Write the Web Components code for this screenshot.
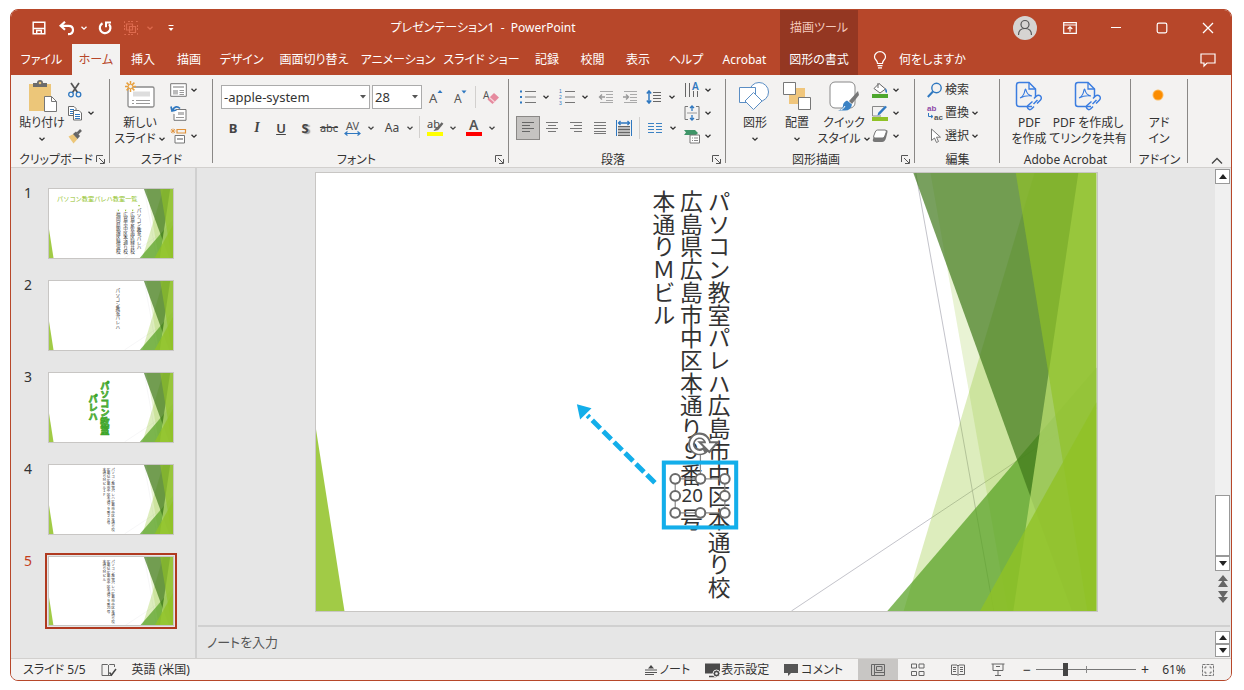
<!DOCTYPE html>
<html lang="ja">
<head>
<meta charset="utf-8">
<title>プレゼンテーション1 - PowerPoint</title>
<style>
  * { box-sizing: border-box; }
  body {
    margin: 0; height: 100vh; padding: 9px 12px 9px 10px; background: #fff; color: #333;
    font: 12px/16px "Noto Sans", "Noto Sans CJK JP", sans-serif;
    font-feature-settings: "palt";
  }
</style>
</head>
<body>
<ppt-app></ppt-app>
<script>
const BASE = `
  *, :host { box-sizing: border-box; }
  button, select, textarea { font: inherit; color: inherit; font-feature-settings: inherit; margin: 0; padding: 0; border: 0; background: none; border-radius: 0; }
  button { cursor: pointer; display: flex; align-items: center; justify-content: center; white-space: nowrap; }
`;
function define(name, css, html, setup) {
  const t = document.createElement('template');
  t.innerHTML = `<style>${BASE}${css}</style>${html}`;
  customElements.define(name, class extends HTMLElement {
    connectedCallback() {
      if (this.shadowRoot) return;
      this.attachShadow({ mode: 'open' }).append(t.content.cloneNode(true));
      if (setup) setup(this, this.shadowRoot);
    }
  });
}

/* name: [width, height, markup] */
const ICONS = {
  chev: [8, 8, '<path d="M1.5 2.8 4 5.2 6.5 2.8" stroke="currentColor" stroke-width="1.3"/>'],
  up: [12, 8, '<path d="M1 6.5 6 1.5l5 5" stroke="#444" stroke-width="1.3"/>'],
  caret: [6, 4, '<path d="M0 0h6L3 3.5z" fill="#555"/>'],
  save: [14, 14, '<path d="M1.2 1.2h11.6v11.6H1.2z" stroke="#fff" stroke-width="1.5"/><path d="M1 7.500h12M4.7 13V9.500h4.600V13" stroke="#fff" stroke-width="1.4"/>'],
  undo: [16, 14, '<path d="M6 .8 1.6 4.8 6 8.8M2 4.8h7.500q4.500 0 4.500 4.200t-5 4.200" stroke="#fff" stroke-width="2.200"/>'],
  redo: [14, 14, '<path d="M4.500 2.200A5.300 5.300 0 1 0 11 3.200" stroke="#fff" stroke-width="2.200"/><path d="M7 1.500h6M8 1v5.200" stroke="#fff" stroke-width="2"/>'],
  group: [16, 16, '<path d="M1.500 3v-1.500H3M13 1.500h1.500V3M14.500 13v1.500H13M3 14.500H1.500V13M5 1.500h6M5 14.500h6M1.500 5v6M14.500 5v6" stroke="#dd6a4e" stroke-dasharray="2 1"/><path d="M3.500 4h6v6h-6zM6.500 6.500h6v6h-6z" stroke="#dd6a4e" stroke-width="1.200"/>'],
  custom: [8, 8, '<path d="M1.500 1.500h5" stroke="#fff"/><path d="M1.500 4h5L4 7z" fill="#fff"/>'],
  avatar: [24, 24, '<circle cx="12" cy="12" r="12" fill="#d6d4d2"/><circle cx="12" cy="8.500" r="4" stroke="#555" stroke-width="1.200"/><path d="M5.500 19q0-6.500 6.500-6.500t6.500 6.500" stroke="#555" stroke-width="1.200"/>'],
  opts: [14, 12, '<path d="M.7.7h12.600v10.600H.7zM.7 3h12.600" stroke="#fff" stroke-width="1.200"/><path d="M7 9.800V5M4.700 7 7 4.800 9.300 7" stroke="#fff" stroke-width="1.200"/>'],
  min: [12, 12, '<path d="M1 5.500h10" stroke="#fff" stroke-width="1.200"/>'],
  max: [12, 12, '<rect x="1.200" y="1.200" width="9.600" height="9.600" rx="1.500" stroke="#fff" stroke-width="1.200"/>'],
  close: [12, 12, '<path d="M1 1l10 10M11 1 1 11" stroke="#fff" stroke-width="1.300"/>'],
  bulb: [14, 18, '<path d="M4.500 12.500Q4.500 10.500 3 9 1.500 7.500 1.500 5.800A5.400 5 0 0 1 12.500 5.800Q12.500 7.500 11 9 9.500 10.500 9.500 12.500zM4.500 14.700h5M5 16.800h4" stroke="#fff" stroke-width="1.200"/>'],
  comment: [16, 14, '<path d="M1 1h14v9H7l-3 3v-3H1z" stroke="#fff" stroke-width="1.200"/>'],
  paste: [32, 34, '<path d="M3 5h22v27H3z" fill="#ecc679"/><path d="M7 8V4h4q0-3 3-3t3 3h4v4z" fill="#6b6b6b"/><circle cx="14" cy="4" r="1.300" fill="#ecc679"/><path d="M18.500 17.500h7l5 5v10h-12z" fill="#fff" stroke="#777"/><path d="M25.500 17.500v5h5" stroke="#777"/>'],
  cut: [16, 16, '<path d="M4 1l6.500 9.500M12 1 5.500 10.500" stroke="#555" stroke-width="1.700"/><circle cx="4" cy="12.500" r="2.300" stroke="#2f78c0" stroke-width="1.300"/><circle cx="11.500" cy="12.500" r="2.300" stroke="#2f78c0" stroke-width="1.300"/>'],
  copy: [16, 16, '<path d="M1.500 1.500h5.500l2 2v7h-7.500z" fill="#fff" stroke="#6b6b6b"/><path d="M6.500 5.500h5.500l2.500 2.500v7h-8z" fill="#fff" stroke="#6b6b6b"/><path d="M3 4.500h4M3 6.500h3M3 8.500h3M8 9.500h5M8 11.500h5M8 13.500h5" stroke="#2f78c0"/>'],
  painter: [16, 16, '<path d="M1.500 8.500l5-2.500 4 5-4 4.500z" fill="#ecc679"/><path d="M6 6l3-2.500 4 4.500-2.500 3z" fill="#666"/><path d="M10.500 5.500 14 2" stroke="#666" stroke-width="2.600"/>'],
  newslide: [32, 32, '<rect x="4" y="7" width="26" height="20" rx="1.500" fill="#fff" stroke="#8a8a8a" stroke-width="1.300"/><path d="M9 11.500h17v5H9z" fill="#ddd"/><path d="M8 20.500h2M12 20.500h14M8 23.500h2M12 23.500h14" stroke="#999"/><path d="M6.500 1v11M1 6.500h11M2.600 2.600l7.800 7.800M10.400 2.600l-7.800 7.800" stroke="#e8a03c" stroke-width="1.500"/><circle cx="6.500" cy="6.500" r="2.200" fill="#f3f2f1" stroke="#e8a03c"/>'],
  layout: [17, 14, '<path d="M.7.7h15.600v12.600H.7z" fill="#fff" stroke="#777"/><path d="M3 3h11v2H3zM3 7h5v4.500H3z" fill="#bbb"/><path d="M9.500 7.500H14M9.500 9.500H14M9.500 11.500H14" stroke="#999"/>'],
  reset: [17, 16, '<path d="M6 4.500h10v10.800H4V9" fill="#fff" stroke="#777"/><path d="M8 7h6v3H8z" fill="#bbb"/><path d="M6 12.500h8" stroke="#999"/><path d="M10 3.500Q6-.5 2.500 5M1 1.500 2 6l4.500-1" stroke="#2f78c0" stroke-width="1.700"/>'],
  section: [17, 16, '<path d="M7 1.500h8.500v3.500H7z" stroke="#e0913a" stroke-width="1.200"/><path d="M.5 3h5M3 .5v5M1 1l4 4M5 1 1 5" stroke="#e0913a" stroke-width=".8"/><path d="M5 7.500h9.500v7.500H5z" fill="#fff" stroke="#777"/><path d="M7 10h6v2H7z" fill="#aaa"/>'],
  grow: [16, 16, '<text x="1" y="14" font-size="13" fill="#555">A</text><path d="M9.500 4l2.500-3 2.500 3z" fill="#2f78c0"/>'],
  shrink: [16, 16, '<text x="2" y="14" font-size="12" fill="#555">A</text><path d="M9.500 1.500l2.500 3 2.500-3z" fill="#2f78c0"/>'],
  clear: [16, 16, '<text x="0" y="10" font-size="10" fill="#555">A</text><path d="M11 4l5 4.500-6.500 6.500-5-4.500z" fill="#e58a9e"/><path d="M6.500 8.500l5 4.500" stroke="#f7d5dc" stroke-width="1.200"/>'],
  av: [18, 16, '<text x="2" y="10" font-size="11" fill="#555">AV</text><path d="M1 13.500h15M3.500 11.500l-2.500 2 2.500 2M13.500 11.500l2.500 2-2.500 2" stroke="#2f78c0" stroke-width="1.200"/>'],
  hilite: [18, 18, '<text x="1" y="9" font-size="11" fill="#444">ab</text><path d="M16.500 4l-5 6" stroke="#666" stroke-width="2.400"/><path d="M10.500 8l2 3-5 1z" fill="#666"/><path d="M1 13h16v4H1z" fill="#ff0"/>'],
  fcolor: [18, 18, '<text x="4" y="11" font-size="14" font-weight="600" fill="#555">A</text><path d="M1 13h16v4H1z" fill="#f00"/>'],
  bullets: [16, 14, '<path d="M5 1.500h11M5 7h11M5 12.500h11" stroke="#777"/><path d="M0 .5h2v2H0zM0 6h2v2H0zM0 11.500h2v2H0z" fill="#2f78c0"/>'],
  numbers: [16, 16, '<path d="M6 2.500h10M6 8h10M6 13.500h10" stroke="#777"/><g class="n" font-size="5" fill="#2f78c0"><text x="0" y="4">1</text><text x="0" y="10">2</text><text x="0" y="16">3</text></g>'],
  outdent: [16, 12, '<path d="M2 .5h13M8 3.500h7M8 6.500h7M8 9.500h7M2 11.500h13" stroke="#aaa"/><path d="M7 6H1.500M4 3.500 1.500 6 4 8.500" stroke="#999" stroke-width="1.400"/>'],
  indent: [16, 12, '<path d="M2 .5h13M8 3.500h7M8 6.500h7M8 9.500h7M2 11.500h13" stroke="#aaa"/><path d="M1 6h5.500M4 3.500 6.500 6 4 8.500" stroke="#999" stroke-width="1.400"/>'],
  spacing: [16, 14, '<path d="M7 2.500h8M7 5.500h8M7 8.500h8M7 11.500h8" stroke="#666"/><path d="M3 1v12M.8 3.500 3 1l2.200 2.500M.8 10.500 3 13l2.200-2.500" stroke="#2f78c0" stroke-width="1.500"/>'],
  textdir: [16, 16, '<path d="M1.500 1v14M5.500 1v14M9.500 9v6M13.500 9v6" stroke="#666"/><text x="8" y="8" font-size="10" font-weight="600" fill="#2f78c0">A</text>'],
  valign: [16, 16, '<path d="M4 1.500H1v13h3M12 1.500h3v13h-3" stroke="#777"/><path d="M3 8h10" stroke="#999"/><path d="M8 1v5M8 10v5M6 3l2-2 2 2M6 13l2 2 2-2" stroke="#2f78c0" stroke-width="1.300"/>'],
  smartart: [18, 16, '<path d="M1 2h11l3 3-2 2H1l2-2.500z" fill="#3f9568"/><path d="M7 7h9.500v8H7z" fill="#fff" stroke="#777"/><path d="M9 10h1M11 10h4M9 12.500h1M11 12.500h4" stroke="#888"/>'],
  left: [14, 12, '<path d="M1 .5h12M1 3.500h8M1 6.500h12M1 9.500h8" stroke="#666"/>'],
  center: [14, 12, '<path d="M1 .5h12M3 3.500h8M1 6.500h12M3 9.500h8" stroke="#777"/>'],
  right: [14, 12, '<path d="M1 .5h12M5 3.500h8M1 6.500h12M5 9.500h8" stroke="#777"/>'],
  justify: [14, 12, '<path d="M1 .5h12M1 3.500h12M1 6.500h12M1 9.500h12M1 11.500h12" stroke="#777"/>'],
  distribute: [16, 16, '<path d="M.5 0v16M15.500 0v16" stroke="#2f78c0"/><path d="M2 6.500h12v9H2z" fill="#bbb"/><path d="M2 6.500h12M2 9.500h12M2 12.500h12M2 15.500h12" stroke="#666"/><path d="M2 3h12M4.500 1 2.500 3l2 2M11.500 1l2 2-2 2" stroke="#2f78c0" stroke-width="1.300"/>'],
  columns: [14, 12, '<path d="M0 1.500h6M8 1.500h6M0 4.500h6M8 4.500h6M0 7.500h6M8 7.500h6M0 10.500h6M8 10.500h6" stroke="#3b82c4"/>'],
  shapes: [32, 30, '<circle cx="20" cy="11" r="9.500" fill="#fff" stroke="#5b8ec4"/><path d="M.5 6.500h16v15H.5z" fill="#fff" stroke="#5b8ec4"/><path d="M14.500 11.500l8.500 8.500-8.500 8.500L6 20z" fill="#fff" stroke="#5b8ec4"/>'],
  arrange: [30, 30, '<path d="M7 7h16v16H7z" fill="#f0c67c"/><path d="M1.500 1.500h12v12h-12zM16.500 16.500h12v12h-12z" fill="#fff" stroke="#777"/>'],
  quick: [32, 32, '<rect x="2" y="2" width="25" height="26" rx="5" fill="#fff" stroke="#888"/><path d="M30 11l1 4-7 9-3-3z" fill="#777"/><path d="M19 20.500l5 4q-1 6-7 6h-7q5-1.500 5-5 0-3 4-5z" fill="#3b82c4"/><path d="M17 26q-1 2.500-4 4" stroke="#fff"/>'],
  fill: [18, 16, '<path d="M8 1.500 14.500 7 9 11 3 6.500z" fill="#fff" stroke="#666"/><path d="M7 6V1" stroke="#666"/><path d="M14.500 6q2.500 3 1 5-2-1-1-5z" fill="#2f78c0"/><path d="M1 12h16v4H1z" fill="#4ea72e"/>'],
  outline: [18, 16, '<path d="M13 1.500H1.500V11H10" stroke="#888"/><path d="M16 2 9 9.500l-2.500 1 .7-2.700L14 .8z" fill="#2f78c0"/><path d="M1 12h16v4H1z" fill="#90c226"/>'],
  effects: [16, 14, '<path d="M5 1h9q2 0 1.500 2L14 9q-1 4-4 4H3q-3 0-2-3z" fill="#777"/><path d="M5.500 1H13q2 0 1.300 2l-1.500 4q-.6 2-2.500 2H3q-2 0-1.300-2l1.500-4Q4 1 5.500 1z" fill="#fff" stroke="#777"/>'],
  search: [16, 16, '<circle cx="9.500" cy="6" r="4.700" stroke="#2f78c0" stroke-width="1.400"/><path d="M6 9.500.8 15" stroke="#2f78c0" stroke-width="2"/>'],
  replace: [16, 16, '<g class="n" font-size="8" font-weight="700"><text x="0" y="6" fill="#8e4aa8">ab</text><text x="7" y="15" fill="#555">ac</text></g><path d="M1.500 8v3.500h4M4 10l2 1.500L4 13" stroke="#2f78c0"/>'],
  select: [16, 16, '<path d="M4.500 1v11.500l3-2.500 2 4.500 2-1-2-4.300h4z" fill="#fff" stroke="#777"/>'],
  pdf: [28, 30, '<path d="M17 25.500H4q-2.500 0-2.500-2.500V4Q1.500 1.500 4 1.500h10L20.500 8v8" stroke="#3b7de0" stroke-width="1.500"/><path d="M14 1.500V8h6.500" stroke="#3b7de0" stroke-width="1.300"/><path d="M5 17q4-2 5-8 .3-2 1 0 1 5 6 6-6-1-12 2z" stroke="#3b7de0" stroke-width="1.200"/><path d="M18.500 23l4-4M17.500 20.500l-4.500 4a2.500 2.500 0 0 0 3.500 3.500l2.500-2.500M19 17.500l2.500-2.500a2.800 2.800 0 0 1 4 4L22 22.500" stroke="#3b7de0" stroke-width="1.500"/>'],
  dot: [32, 32, '<circle cx="15" cy="15" r="5.500" fill="#fdb95a"/><circle cx="15" cy="15" r="4.500" fill="#fb8c00"/>'],
  launcher: [9, 9, '<path d="M.5 7V.5H7" stroke="#555"/><path d="M3 3l5 5M8.500 4v4.500H4" stroke="#555"/>'],
  spell: [16, 14, '<path d="M7.500 2v11M7.500 12.500H1V1.500h5.500l1 1 1-1h5V4M7.500 12.500h3" stroke="#666"/><path d="M8.500 9.500l2 2.500 4.500-6" stroke="#444" stroke-width="1.500"/>'],
  note: [12, 10, '<path d="M3 3.500h6L6 0z" fill="#444"/><path d="M0 5h12M0 7.500h12M0 9.500h9" stroke="#555"/>'],
  display: [16, 16, '<path d="M0 1.500h15v10H0z" fill="#4a4a4a"/><path d="M4 14.500h7" stroke="#4a4a4a" stroke-width="1.500"/><circle cx="11.500" cy="11.500" r="3.500" fill="#4a4a4a" stroke="#f3f2f1"/><circle cx="11.500" cy="11.500" r="1.300" fill="#f3f2f1"/>'],
  bubble: [14, 12, '<path d="M0 0h14v9H7l-3 3V9H0z" fill="#555"/>'],
  normal: [14, 12, '<path d="M.5.500h13v11H.5zM3.500.500v11M3.500 8.500h10M5.500 2.500h5.500v4H5.500z" stroke="#666"/>'],
  sorter: [14, 14, '<path d="M.5 1h5v4h-5zM8 1h5v4H8zM.5 8.500h5v4h-5zM8 8.500h5v4H8z" stroke="#666"/>'],
  reading: [14, 12, '<path d="M.5 1h5.500l1 1 1-1h5.500v9.500H8l-1 1-1-1H.5zM7 2v9M2 3.500h3M2 5.500h3M2 7.500h3M9 3.500h3M9 5.500h3M9 7.500h3" stroke="#666"/>'],
  show: [14, 14, '<path d="M.5 1h13M2 1v6.500h10V1M7 7.500v5M4 12.500h6M5 3.500h4" stroke="#666"/>'],
  fit: [12, 12, '<path d="M.5.500h11v11H.5z" stroke="#777" stroke-dasharray="3 1"/><path d="M3 4.500V3h1.500M7.500 3H9v1.500M9 7.500V9H7.500M4.500 9H3V7.500" stroke="#666"/>'],
  sup: [8, 5, '<path d="M0 5h8L4 0z" fill="#222"/>'],
  sdown: [8, 5, '<path d="M0 0h8L4 5z" fill="#222"/>'],
  prev: [10, 12, '<path d="M0 6h10L5 0zM0 12h10L5 5z" fill="#666"/>'],
  next: [10, 12, '<path d="M0 0h10L5 7zM0 6h10l-5 6z" fill="#666"/>'],
};
define('ppt-icon', ':host{display:inline-flex;flex:none} svg{display:block;fill:none;overflow:visible;font-family:"Noto Sans",sans-serif} .n{font-family:"Liberation Sans",sans-serif}', '<span></span>', (el, root) => {
  const [w, h, body] = ICONS[el.getAttribute('name')];
  root.querySelector('span').innerHTML = `<svg width="${w}" height="${h}" viewBox="0 0 ${w} ${h}" aria-hidden="true">${body}</svg>`;
});

/* Small ribbon button; "menu" adds a chevron */
define('tool-button', `
  :host{display:flex;flex:none}
  button{height:24px}
  .face{min-width:var(--face,24px);display:flex;align-items:center;justify-content:center;gap:2px}
  .menu{width:12px;display:flex;justify-content:center;flex:none}
  :host([pressed]) button{background:#c5c3c1;outline:1px solid #8a8886;outline-offset:-1px}
`, '<button><span class="face"><slot></slot></span></button>', (el, root) => {
  const b = root.querySelector('button');
  if (el.hasAttribute('label')) b.setAttribute('aria-label', el.getAttribute('label'));
  if (el.hasAttribute('menu')) b.insertAdjacentHTML('beforeend', '<span class="menu"><ppt-icon name="chev"></ppt-icon></span>');
});

/* Tall ribbon button: picture above up to two lines of text */
define('big-button', `
  :host{display:block;flex:none}
  button{width:100%;flex-direction:column;justify-content:flex-start}
  .pic{height:36px;display:flex;align-items:center}
  .line{height:16px;display:flex;align-items:center;gap:2px}
  .pic + .line{margin-top:1px}
`, '<button><span class="pic"><slot name="icon"></slot></span><span class="line"><slot></slot></span><span class="line"><slot name="second"></slot></span></button>');

define('ribbon-group', `
  :host{display:flex;flex-direction:column;background:linear-gradient(#8a8886,#8a8886) right 1px/1px 84px no-repeat}
  .body{height:74px;display:flex}
  footer{height:15px;display:flex;align-items:center;padding:0 5px}
  footer span{flex:1;text-align:center;white-space:nowrap}
`, '<div class="body"><slot></slot></div><footer><span></span></footer>', (el, root) => {
  root.querySelector('footer span').textContent = el.getAttribute('label');
  if (el.hasAttribute('launcher')) root.querySelector('footer').insertAdjacentHTML('beforeend', '<button aria-label="詳細"><ppt-icon name="launcher"></ppt-icon></button>');
});

define('combo-box', `
  :host{display:block;position:relative;height:24px}
  select{appearance:none;width:100%;height:100%;border:1px solid #ababab;background:#fff;padding:0 2px;font-size:13px}
  ppt-icon{position:absolute;right:4px;top:10px;pointer-events:none}
`, '<select><option></option></select><ppt-icon name="caret"></ppt-icon>', (el, root) => {
  root.querySelector('option').textContent = el.getAttribute('value');
  root.querySelector('select').setAttribute('aria-label', el.getAttribute('label'));
});

define('title-bar', `
  :host{display:grid;grid-template-columns:769px 78px 1fr;height:34px;color:#fff}
  .left,.right{display:flex;align-items:center}
  .quick{display:grid;grid-template-columns:38px 18px 16px 26px 26px 12px 30px;padding-left:9px}
  .quick button{height:34px}
  .title{flex:1;text-align:center;white-space:pre}
  .ctx{background:#943722;color:#f3c9bd;text-align:center;line-height:36px}
  .right{justify-content:flex-end}
  .right button{width:46px;height:34px}
  .right .me{width:24px;margin-right:10px}
  .dim{color:#dd6a4e}
`, `
  <div class="left">
    <div class="quick">
      <button aria-label="上書き保存"><ppt-icon name="save"></ppt-icon></button>
      <button aria-label="元に戻す"><ppt-icon name="undo"></ppt-icon></button>
      <button aria-label="元に戻す一覧"><ppt-icon name="chev"></ppt-icon></button>
      <button aria-label="繰り返し"><ppt-icon name="redo"></ppt-icon></button>
      <button aria-label="グループ化"><ppt-icon name="group"></ppt-icon></button>
      <button aria-label="グループ化一覧" class="dim"><ppt-icon name="chev"></ppt-icon></button>
      <button aria-label="カスタマイズ"><ppt-icon name="custom"></ppt-icon></button>
    </div>
    <div class="title">プレゼンテーション1  -  PowerPoint</div>
  </div>
  <div class="ctx">描画ツール</div>
  <div class="right">
    <button class="me" aria-label="アカウント"><ppt-icon name="avatar"></ppt-icon></button>
    <button aria-label="リボンの表示オプション"><ppt-icon name="opts"></ppt-icon></button>
    <button aria-label="最小化"><ppt-icon name="min"></ppt-icon></button>
    <button aria-label="最大化"><ppt-icon name="max"></ppt-icon></button>
    <button aria-label="閉じる"><ppt-icon name="close"></ppt-icon></button>
  </div>`);

const TABS = ['ファイル','ホーム','挿入','描画','デザイン','画面切り替え','アニメーション','スライド ショー','記録','校閲','表示','ヘルプ','Acrobat','図形の書式'];
define('ribbon-tabs', `
  :host{display:grid;grid-template-columns:61px 48px 46px 46px 59px 86px 82px 85px 46px 45px 46px 50px 67px 80px 1fr 46px;height:31px;color:#fff}
  .on{background:#f3f2f1;color:#b7472a}
  .ctx{background:#943722;margin-left:2px}
  .tell{justify-content:flex-start;gap:12px;padding-left:15px}
`, TABS.map((t, i) => `<button${i === 1 ? ' class="on"' : i === 13 ? ' class="ctx"' : ''}>${t}</button>`).join('') +
  '<button class="tell"><ppt-icon name="bulb"></ppt-icon>何をしますか</button><button aria-label="コメント"><ppt-icon name="comment"></ppt-icon></button>');

define('ppt-ribbon', `
  :host{display:grid;grid-template-columns:99px 103px 296px 217px 189px 85px 131px 57px 1fr;height:93px;padding-top:3px;background:#f3f2f1;border-bottom:1px solid #d2d0ce}
  .stack{display:flex;flex-direction:column;--face:20px}
  .stack tool-button{height:23px}
  .edit{padding-left:12px}
  .row{display:flex;align-items:center;height:24px}
  .sep{width:1px;height:22px;background:#d2d0ce}
  .row > .sep{margin:0 3px}
  .fontpane{display:flex;flex-direction:column;gap:7px;padding:7px 0 0 8px}
  .name{width:149px;margin-right:2px}
  .size{width:50px;margin-right:2px}
  .grp{display:flex;gap:3px}
  .para{display:flex;flex-direction:column;gap:7px;padding:7px 0 0 7px;width:173px}
  .w42{width:42px} .w46{width:46px} .w52{width:52px} .w56{width:56px} .w72{width:72px}
  .in8{margin-left:8px} .in6{margin-left:6px} .in2{margin-left:2px}
  i{font-family:"Liberation Serif",serif;font-size:14px;font-weight:bold}
  u{font-weight:600;font-size:13px} b{font-weight:700;font-size:13px}
  .sh{font-weight:700;font-size:13px;text-shadow:2px 1px 1px #999}
  s{font-size:11px}
  .collapse{align-self:end;justify-self:end;margin:0 8px 2px 0}
  .fmt{color:#444}
`, `
  <ribbon-group label="クリップボード" launcher>
    <big-button class="w46 in8"><ppt-icon slot="icon" name="paste"></ppt-icon>貼り付け<ppt-icon slot="second" name="chev"></ppt-icon></big-button>
    <div class="stack">
      <tool-button label="切り取り"><ppt-icon name="cut"></ppt-icon></tool-button>
      <tool-button label="コピー" menu><ppt-icon name="copy"></ppt-icon></tool-button>
      <tool-button label="書式のコピー/貼り付け"><ppt-icon name="painter"></ppt-icon></tool-button>
    </div>
  </ribbon-group>
  <ribbon-group label="スライド">
    <big-button class="w56 in2"><ppt-icon slot="icon" name="newslide"></ppt-icon>新しい<span slot="second">スライド</span><ppt-icon slot="second" name="chev"></ppt-icon></big-button>
    <div class="stack">
      <tool-button label="レイアウト" menu><ppt-icon name="layout"></ppt-icon></tool-button>
      <tool-button label="リセット"><ppt-icon name="reset"></ppt-icon></tool-button>
      <tool-button label="セクション" menu><ppt-icon name="section"></ppt-icon></tool-button>
    </div>
  </ribbon-group>
  <ribbon-group label="フォント" launcher>
    <div class="fontpane">
      <div class="row">
        <combo-box class="name" label="フォント" value="-apple-system"></combo-box>
        <combo-box class="size" label="フォント サイズ" value="28"></combo-box>
        <tool-button label="フォント サイズの拡大"><ppt-icon name="grow"></ppt-icon></tool-button>
        <tool-button label="フォント サイズの縮小"><ppt-icon name="shrink"></ppt-icon></tool-button>
        <span class="sep"></span>
        <tool-button label="書式のクリア"><ppt-icon name="clear"></ppt-icon></tool-button>
      </div>
      <div class="row fmt">
        <tool-button><b>B</b></tool-button>
        <tool-button><i>I</i></tool-button>
        <tool-button><u>U</u></tool-button>
        <tool-button><span class="sh">S</span></tool-button>
        <tool-button><s>abc</s></tool-button>
        <div class="grp">
          <tool-button label="文字の間隔" menu><ppt-icon name="av"></ppt-icon></tool-button>
          <tool-button menu><span>Aa</span></tool-button>
          <span class="sep"></span>
          <tool-button label="蛍光ペンの色" menu><ppt-icon name="hilite"></ppt-icon></tool-button>
          <tool-button label="フォントの色" menu><ppt-icon name="fcolor"></ppt-icon></tool-button>
        </div>
      </div>
    </div>
  </ribbon-group>
  <ribbon-group label="段落" launcher>
    <div class="para">
      <div class="row">
        <div class="grp">
          <tool-button label="箇条書き" menu><ppt-icon name="bullets"></ppt-icon></tool-button>
          <tool-button label="段落番号" menu><ppt-icon name="numbers"></ppt-icon></tool-button>
          <tool-button label="インデントを減らす"><ppt-icon name="outdent"></ppt-icon></tool-button>
        </div>
        <tool-button label="インデントを増やす"><ppt-icon name="indent"></ppt-icon></tool-button>
        <tool-button label="行間" menu><ppt-icon name="spacing"></ppt-icon></tool-button>
      </div>
      <div class="row">
        <tool-button label="左揃え" pressed><ppt-icon name="left"></ppt-icon></tool-button>
        <tool-button label="中央揃え"><ppt-icon name="center"></ppt-icon></tool-button>
        <tool-button label="右揃え"><ppt-icon name="right"></ppt-icon></tool-button>
        <tool-button label="両端揃え"><ppt-icon name="justify"></ppt-icon></tool-button>
        <tool-button label="均等割り付け"><ppt-icon name="distribute"></ppt-icon></tool-button>
        <span class="sep"></span>
        <tool-button label="段の追加" menu><ppt-icon name="columns"></ppt-icon></tool-button>
      </div>
    </div>
    <div class="stack">
      <tool-button label="文字列の方向" menu><ppt-icon name="textdir"></ppt-icon></tool-button>
      <tool-button label="文字の配置" menu><ppt-icon name="valign"></ppt-icon></tool-button>
      <tool-button label="SmartArt に変換" menu><ppt-icon name="smartart"></ppt-icon></tool-button>
    </div>
  </ribbon-group>
  <ribbon-group label="図形描画" launcher>
    <big-button class="w42 in8"><ppt-icon slot="icon" name="shapes"></ppt-icon>図形<ppt-icon slot="second" name="chev"></ppt-icon></big-button>
    <big-button class="w42"><ppt-icon slot="icon" name="arrange"></ppt-icon>配置<ppt-icon slot="second" name="chev"></ppt-icon></big-button>
    <big-button class="w52"><ppt-icon slot="icon" name="quick"></ppt-icon>クイック<span slot="second">スタイル</span><ppt-icon slot="second" name="chev"></ppt-icon></big-button>
    <div class="stack">
      <tool-button label="図形の塗りつぶし" menu><ppt-icon name="fill"></ppt-icon></tool-button>
      <tool-button label="図形の枠線" menu><ppt-icon name="outline"></ppt-icon></tool-button>
      <tool-button label="図形の効果" menu><ppt-icon name="effects"></ppt-icon></tool-button>
    </div>
  </ribbon-group>
  <ribbon-group label="編集">
    <div class="stack edit">
      <tool-button><ppt-icon name="search"></ppt-icon>検索</tool-button>
      <tool-button menu><ppt-icon name="replace"></ppt-icon>置換</tool-button>
      <tool-button menu><ppt-icon name="select"></ppt-icon>選択</tool-button>
    </div>
  </ribbon-group>
  <ribbon-group label="Adobe Acrobat">
    <big-button class="w46 in6"><ppt-icon slot="icon" name="pdf"></ppt-icon>PDF<span slot="second">を作成</span></big-button>
    <big-button class="w72"><ppt-icon slot="icon" name="pdf"></ppt-icon>PDF を作成し<span slot="second">てリンクを共有</span></big-button>
  </ribbon-group>
  <ribbon-group label="アドイン">
    <big-button class="w56"><ppt-icon slot="icon" name="dot"></ppt-icon>アド<span slot="second">イン</span></big-button>
  </ribbon-group>
  <button class="collapse" aria-label="リボンを折りたたむ"><ppt-icon name="up"></ppt-icon></button>`);

/* A 960 x 540 point slide, scaled to its box */
const FACET = `
  <g stroke="#b5b5bd" fill="none"><path d="M738 0l96 540M585 540l375-250"/></g>
  <path d="M884 0h76v540H723z" fill="#90c226" fill-opacity=".3"/>
  <path d="M756 0h204v540H851z" fill="#90c226" fill-opacity=".2"/>
  <path d="M703 540 960 240v300z" fill="#54a021" fill-opacity=".72"/>
  <path d="M735 0h225v540h-30z" fill="#3f7819" fill-opacity=".7"/>
  <path d="M938 0h22v540H858z" fill="#c0e474" fill-opacity=".7"/>
  <path d="M861 0h99v540h-11z" fill="#90c226" fill-opacity=".65"/>
  <path d="M817 540 960 283v257z" fill="#90c226" fill-opacity=".8"/>
  <path d="M0 316v224h35z" fill="#90c226" fill-opacity=".85"/>`;
const v = (x, y, s, size = 28) => `<text class="v" x="${x}" y="${y}" font-size="${size}">${s}</text>`;
const COL1 = 'パソコン教室パレハ広島市中区本通り校';
const SLIDES = {
  1: `<text x="62" y="92" font-size="48" fill="#90c226">パソコン教室パレハ教室一覧</text>
      <path d="M690 126h14l-7 14zM641 162h14l-7 14zM586 162h14l-7 14zM530 162h14l-7 14z" fill="#90c226"/>
      ${v(697,152,'パソコン教室パレハ',36)}${v(648,184,'広島安佐南区緑井校',36)}${v(593,184,'広島市中区本通り校',36)}${v(537,184,'福岡県飯塚区穂波校',36)}`,
  2: v(532, 54, 'パソコン教室パレハ', 36),
  3: `<g class="art">${v(432,60,'パソコン教室',71)}${v(342,166,'パレハ',71)}</g>`,
  4: v(496,21,COL1) + v(462,21,'広島県広島市中区本通り９番２０号') + v(428,21,'本通りＭビル１Ｆ'),
  5: v(496,21,COL1) + v(462,21,'広島県広島市中区本通り９番　号') + v(428,21,'本通りＭビル') + '<text class="box" x="463" y="406" font-size="23" text-anchor="middle">20</text>',
};
const RING = (x, y) => `<circle cx="${x}" cy="${y}" r="6" fill="#fff" stroke="#6b6b6b" stroke-width="2.500"/>`;
const EDIT = `
  <path d="M442 377h61v42h-61zM473 345v32" stroke="#8a8a8a" fill="none" stroke-width="1.500"/>
  ${[442,473,503].map(x => RING(x,377) + RING(x,419)).join('')}${RING(442,398)}${RING(503,398)}
  <circle cx="472" cy="334" r="10" fill="none" stroke="#6b6b6b" stroke-width="8"/>
  <path d="M472 332h22l-10 12z" fill="#fff" stroke="#6b6b6b" stroke-width="2.500"/>
  <path d="M482 334A10 10 0 1 0 477 343" fill="none" stroke="#fff" stroke-width="3.500"/>
  <rect x="428" y="357" width="89" height="80" fill="none" stroke="#13aeea" stroke-width="5"/>
  <path d="M417 382 334 299" stroke="#13aeea" stroke-width="6" stroke-dasharray="14 5" fill="none"/>
  <path d="M321 285l18 5-14 14z" fill="#13aeea"/>`;
define('ppt-slide', `
  :host{display:block;aspect-ratio:16/9;background:#fff;border:1px solid #c8c6c4}
  svg{display:block;width:100%;height:100%;font-family:"Noto Sans CJK JP",sans-serif;fill:#333;font-feature-settings:normal}
  .v{writing-mode:vertical-rl;text-orientation:upright;white-space:pre}
  .box{font-family:"Noto Sans",sans-serif}
  .art text{font-weight:700;fill:#7cc95a;stroke:#3fa52c;stroke-width:6px}
`, '<svg viewBox="0 0 960 540" preserveAspectRatio="none"></svg>', (el, root) => {
  root.querySelector('svg').innerHTML = FACET + SLIDES[el.getAttribute('number')] + (el.hasAttribute('editing') ? EDIT : '');
});

define('slide-thumb', `
  :host{display:flex;align-items:flex-start}
  span{width:24px;margin-left:1px;font-size:14px;margin-top:-3px;flex:none}
  ppt-slide{width:126px}
  :host([selected]) span{color:#c43e1c}
  :host([selected]) ppt-slide{outline:2px solid #b03a20;outline-offset:1px}
`, '<span></span>', (el, root) => {
  const n = el.getAttribute('number');
  root.querySelector('span').textContent = n;
  root.querySelector('span').insertAdjacentHTML('afterend', `<ppt-slide number="${n}"></ppt-slide>`);
});

define('scroll-rail', `
  :host{display:flex;flex-direction:column;width:15px;background:#f0f0f0}
  .b{height:15px;border:1px solid #999;background:#fff;flex:none}
  .track{flex:1;display:flex;flex-direction:column;justify-content:flex-end}
  .thumb{height:61px;border:1px solid #999;background:#fff}
  .jump{background:#e6e6e6;padding:4px 0 22px;display:grid;gap:4px}
  .jump button{height:12px}
  :host([mini]) .track,:host([mini]) .jump{display:none}
  :host([mini]) .b{height:13px}
`, `<button class="b" aria-label="上へ"><ppt-icon name="sup"></ppt-icon></button><div class="track"><div class="thumb"></div></div>
  <button class="b" aria-label="下へ"><ppt-icon name="sdown"></ppt-icon></button>
  <div class="jump"><button aria-label="前のスライド"><ppt-icon name="prev"></ppt-icon></button><button aria-label="次のスライド"><ppt-icon name="next"></ppt-icon></button></div>`);

define('status-bar', `
  :host{display:flex;align-items:center;height:22px;background:#f3f2f1;padding:0 17px 0 12px;border-top:1px solid #d2d0ce}
  .left{display:flex;align-items:center;gap:15px;flex:1}
  .panes{display:flex;gap:15px;margin-right:15px}
  .panes button{gap:3px}
  .panes .tight{gap:0}
  .views{display:flex}
  .views button{width:40px;height:21px}
  .views .on{background:#c8c6c4}
  .zoom{display:flex;align-items:center}
  .zoom button{width:18px;font-size:14px;height:20px}
  .zoom .pct{width:40px;font-size:12px;margin-right:8px}
  input{appearance:none;width:100px;height:14px;margin:0;background:linear-gradient(#888,#888) 50% 50%/1px 7px no-repeat,linear-gradient(#777,#777) 0 50%/100% 1px no-repeat}
  input::-webkit-slider-thumb{appearance:none;width:5px;height:13px;background:#444}
`, `
  <div class="left"><span>スライド 5/5</span><ppt-icon name="spell"></ppt-icon><span>英語 (米国)</span></div>
  <div class="panes">
    <button><ppt-icon name="note"></ppt-icon>ノート</button>
    <button class="tight"><ppt-icon name="display"></ppt-icon>表示設定</button>
    <button><ppt-icon name="bubble"></ppt-icon>コメント</button>
  </div>
  <div class="views">
    <button class="on" aria-label="標準"><ppt-icon name="normal"></ppt-icon></button>
    <button aria-label="スライド一覧"><ppt-icon name="sorter"></ppt-icon></button>
    <button aria-label="閲覧表示"><ppt-icon name="reading"></ppt-icon></button>
    <button aria-label="スライド ショー"><ppt-icon name="show"></ppt-icon></button>
  </div>
  <div class="zoom">
    <button>−</button><input type="range" min="0" max="100" value="28" aria-label="ズーム"><button>+</button>
    <button class="pct">61%</button><ppt-icon name="fit"></ppt-icon>
  </div>`);

define('ppt-app', `
  :host{display:flex;flex-direction:column;height:100%;border:1px solid #b7472a;border-radius:8px;overflow:hidden;background:#e6e6e6}
  header{background:#b7472a;flex:none}
  ppt-ribbon,status-bar{flex:none}
  main{flex:1;display:flex;min-height:0}
  nav{width:186px;flex:none;border-right:2px solid #d0d0d0;padding:20px 0 0 12px;display:flex;flex-direction:column;gap:21px}
  .editor{flex:1;display:flex;flex-direction:column;min-width:0;padding:0 1px 0 1px}
  .canvas{flex:1;display:flex;min-height:0}
  .stage{flex:1;display:flex;justify-content:center;padding:4px 0 13px}
  .stage ppt-slide{height:100%}
  .canvas scroll-rail{margin-top:1px}
  .notes{flex:none;display:flex;height:33px;border-top:2px solid #d0d0d0;padding-top:4px}
  textarea{flex:1;resize:none;outline:none;font-size:13px;line-height:20px;padding:1px 0 0 9px}
  textarea::placeholder{color:#555;opacity:1}
`, `
  <header><title-bar></title-bar><ribbon-tabs></ribbon-tabs></header>
  <ppt-ribbon></ppt-ribbon>
  <main>
    <nav aria-label="スライド">
      <slide-thumb number="1"></slide-thumb><slide-thumb number="2"></slide-thumb><slide-thumb number="3"></slide-thumb>
      <slide-thumb number="4"></slide-thumb><slide-thumb number="5" selected></slide-thumb>
    </nav>
    <div class="editor">
      <div class="canvas"><div class="stage"><ppt-slide number="5" editing></ppt-slide></div><scroll-rail></scroll-rail></div>
      <div class="notes"><textarea aria-label="ノート" placeholder="ノートを入力"></textarea><scroll-rail mini></scroll-rail></div>
    </div>
  </main>
  <status-bar></status-bar>`);
</script>
</body>
</html>
